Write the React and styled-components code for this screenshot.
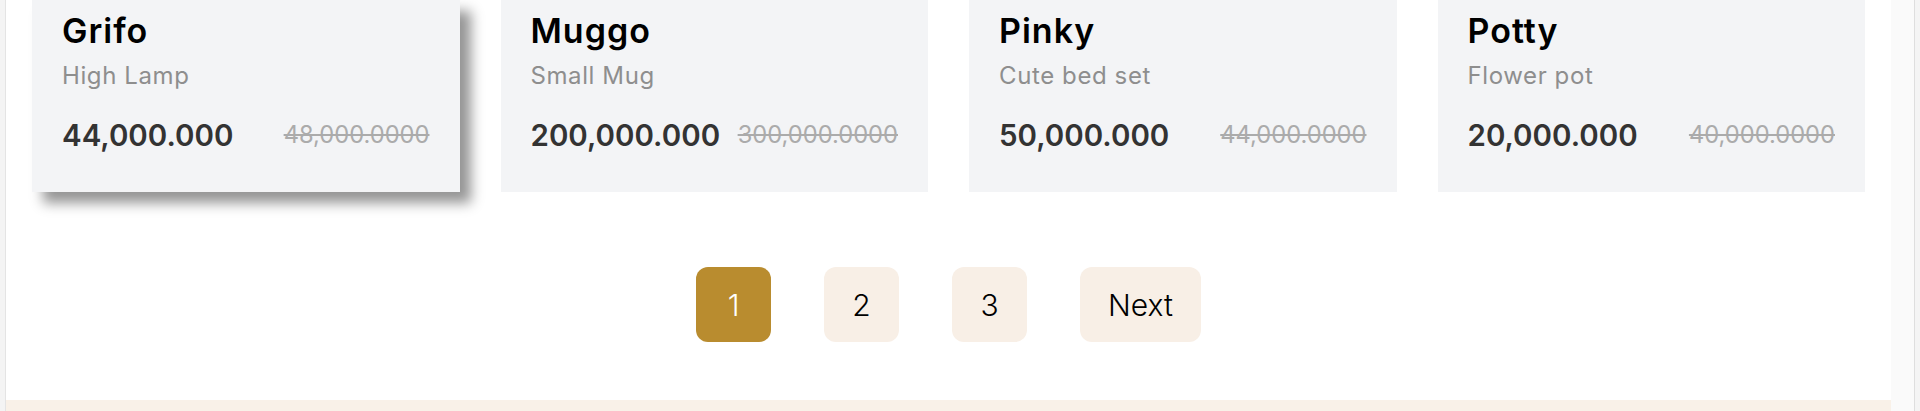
import React from "react";
import styled, { createGlobalStyle } from "styled-components";

const Global = createGlobalStyle`
  html, body { margin: 0; padding: 0; overflow: hidden; background: #ffffff; }
  body { font-family: "Inter", "Open Sans", sans-serif; }
  * { box-sizing: border-box; }
`;

const Frame = styled.div`
  display: flex;
  width: 1920px;
  height: 411px;
`;

const LeftRail = styled.div`
  width: 6px;
  flex: none;
  background: #f4f4f4;
  border-right: 1px solid #e4e4e4;
`;

const RightRail = styled.div`
  width: 24px;
  flex: none;
  background: #fafafa;
  border-right: 1px solid #dedede;
`;

const EdgeStrip = styled.div`
  width: 5px;
  flex: none;
  background: #f4f4f4;
`;

const Main = styled.main`
  flex: 1;
  display: flex;
  flex-direction: column;
  background: #ffffff;
`;

const Section = styled.section`
  padding: 0 26px;
  display: flex;
  flex-direction: column;
  flex: 1;
`;

const Grid = styled.div`
  display: grid;
  grid-template-columns: repeat(4, 1fr);
  column-gap: 41px;
`;

const Card = styled.article`
  background: #f3f4f6;
  padding: 11px 30px 38px 30px;
  box-shadow: ${(p) => (p.$raised ? "11px 11px 12px rgba(0, 0, 0, 0.42)" : "none")};
  position: relative;
  z-index: ${(p) => (p.$raised ? 1 : 0)};
`;

const Title = styled.h3`
  margin: 0;
  font-size: 34px;
  line-height: 40px;
  font-weight: 600;
  letter-spacing: 1px;
  color: #000000;
`;

const Subtitle = styled.p`
  margin: 10px 0 0;
  font-size: 24px;
  line-height: 30px;
  font-weight: 400;
  letter-spacing: 0.6px;
  color: #8e8e8e;
`;

const PriceRow = styled.div`
  margin-top: 25px;
  display: flex;
  align-items: center;
  justify-content: space-between;
  gap: 16px;
`;

const Price = styled.span`
  font-size: 29.5px;
  line-height: 38px;
  font-weight: 600;
  color: #333333;
  white-space: nowrap;
`;

const OldPrice = styled.span`
  font-size: 23.7px;
  line-height: 30px;
  font-weight: 400;
  color: #ababab;
  text-decoration: line-through;
  white-space: nowrap;
`;

const Pagination = styled.nav`
  margin-top: 75px;
  display: flex;
  justify-content: center;
  gap: 53px;
`;

const PageButton = styled.button`
  height: 75px;
  min-width: 75px;
  padding: 0 ${(p) => (p.$wide ? "28px" : "0")};
  border: none;
  border-radius: 12px;
  background: ${(p) => (p.$active ? "#b98c2f" : "#f8efe6")};
  color: ${(p) => (p.$active ? "#ffffff" : "#000000")};
  font-family: "Inter", "Open Sans", sans-serif;
  font-size: 30px;
  font-weight: 300;
  display: flex;
  align-items: center;
  justify-content: center;
  cursor: pointer;
`;

const Footer = styled.footer`
  margin-top: auto;
  height: 11px;
  background: #f9f1e8;
  flex: none;
`;

const products = [
  { name: "Grifo", desc: "High Lamp", price: "44,000.000", old: "48,000.0000", raised: true },
  { name: "Muggo", desc: "Small Mug", price: "200,000.000", old: "300,000.0000" },
  { name: "Pinky", desc: "Cute bed set", price: "50,000.000", old: "44,000.0000" },
  { name: "Potty", desc: "Flower pot", price: "20,000.000", old: "40,000.0000" },
];

export default function App() {
  return (
    <>
      <Global />
      <Frame>
        <LeftRail />
        <Main>
          <Section>
            <Grid>
              {products.map((p) => (
                <Card key={p.name} $raised={p.raised}>
                  <Title>{p.name}</Title>
                  <Subtitle>{p.desc}</Subtitle>
                  <PriceRow>
                    <Price>{p.price}</Price>
                    <OldPrice>{p.old}</OldPrice>
                  </PriceRow>
                </Card>
              ))}
            </Grid>
            <Pagination>
              <PageButton $active>1</PageButton>
              <PageButton>2</PageButton>
              <PageButton>3</PageButton>
              <PageButton $wide>Next</PageButton>
            </Pagination>
          </Section>
          <Footer />
        </Main>
        <RightRail />
        <EdgeStrip />
      </Frame>
    </>
  );
}
